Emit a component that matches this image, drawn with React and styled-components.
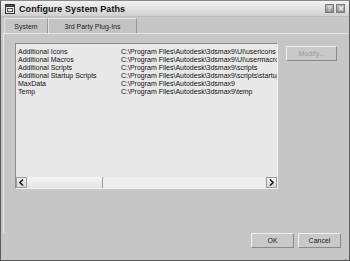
import React from 'react';
import styled, { createGlobalStyle } from 'styled-components';

const GlobalStyle = createGlobalStyle`
  html, body {
    margin: 0;
    padding: 0;
    background: #c6c6c6;
  }
  * {
    box-sizing: border-box;
  }
`;

const Window = styled.div`
  width: 350px;
  height: 261px;
  background: #c6c6c6;
  border: 1px solid #5a5a5a;
  border-top-color: #8a8a8a;
  display: flex;
  flex-direction: column;
  font-family: "Liberation Sans", Arial, sans-serif;
  color: #111;
  overflow: hidden;
  position: relative;
`;

const TitleBar = styled.div`
  height: 16px;
  display: flex;
  align-items: center;
  padding: 0 4px 0 4px;
  background: linear-gradient(#f2f2f2, #dcdcdc 70%, #cfcfcf);
  border-bottom: 1px solid #bcbcbc;
`;

const TitleText = styled.span`
  margin-left: 4px;
  font-size: 9px;
  font-weight: bold;
  letter-spacing: 0.1px;
  flex: 1;
`;

const TitleButton = styled.div`
  width: 9px;
  height: 9px;
  margin-left: 2px;
  border: 1px solid #7c7c7c;
  background: linear-gradient(#bdbdbd, #8f8f8f);
  display: flex;
  align-items: center;
  justify-content: center;
  font-size: 7px;
  font-weight: bold;
  color: #f4f4f4;
  line-height: 1;
`;

const TabRow = styled.div`
  display: flex;
  padding: 1px 0 0 3px;
  height: 16px;
`;

const Tab = styled.div`
  width: ${p => p.w}px;
  height: 16px;
  display: flex;
  align-items: center;
  justify-content: center;
  font-size: 7px;
  border: 1px solid #e2e2e2;
  border-right-color: #9a9a9a;
  border-bottom: none;
  background: ${p => (p.active ? '#c6c6c6' : '#c3c3c3')};
  color: #222;
`;

const Panel = styled.div`
  flex: 1;
  border-top: 1px solid #e6e6e6;
  border-left: 1px solid #e6e6e6;
  margin-left: 2px;
  display: flex;
  padding: 9px 0 0 11px;
`;

const ListBox = styled.div`
  width: 263px;
  height: 146px;
  background: #e8e8e8;
  border: 1px solid #8c8c8c;
  border-right-color: #f2f2f2;
  border-bottom-color: #f2f2f2;
  display: flex;
  flex-direction: column;
`;

const Rows = styled.div`
  flex: 1;
  padding: 4px 0 0 2px;
  overflow: hidden;
`;

const Row = styled.div`
  display: grid;
  grid-template-columns: 103px 1fr;
  height: 8px;
  font-size: 7px;
  line-height: 8px;
  white-space: nowrap;
  overflow: hidden;
`;

const Cell = styled.span`
  overflow: hidden;
`;

const ScrollBar = styled.div`
  height: 11px;
  display: flex;
  background: #eeeeee;
`;

const ArrowButton = styled.div`
  width: 11px;
  height: 11px;
  border: 1px solid #9c9c9c;
  background: linear-gradient(#f4f4f4, #d6d6d6);
  display: flex;
  align-items: center;
  justify-content: center;
`;

const Thumb = styled.div`
  width: 76px;
  border-right: 1px solid #9c9c9c;
  background: linear-gradient(#f6f6f6, #e4e4e4);
`;

const Track = styled.div`
  flex: 1;
`;

const SideColumn = styled.div`
  padding: 3px 0 0 8px;
`;

const Button = styled.div`
  width: ${p => p.w || 43}px;
  height: 15px;
  display: flex;
  align-items: center;
  justify-content: center;
  font-size: 7px;
  color: ${p => (p.disabled ? '#9a9a9a' : '#222')};
  border: 1px solid #f0f0f0;
  border-right-color: #8a8a8a;
  border-bottom-color: #8a8a8a;
  background: #c9c9c9;
`;

const Footer = styled.div`
  display: flex;
  justify-content: flex-end;
  gap: 4px;
  padding: 0 8px 12px 0;
`;

const Grip = styled.div`
  position: absolute;
  right: 2px;
  bottom: 2px;
  width: 7px;
  height: 7px;
`;

const Chevron = ({ dir }) => (
  <svg width="5" height="7" viewBox="0 0 5 7">
    <path
      d={dir === 'left' ? 'M4 0.5 L1 3.5 L4 6.5' : 'M1 0.5 L4 3.5 L1 6.5'}
      stroke="#222"
      strokeWidth="1.6"
      fill="none"
    />
  </svg>
);

const paths = [
  ['Additional Icons', 'C:\\Program Files\\Autodesk\\3dsmax9\\UI\\usericons'],
  ['Additional Macros', 'C:\\Program Files\\Autodesk\\3dsmax9\\UI\\usermacros'],
  ['Additional Scripts', 'C:\\Program Files\\Autodesk\\3dsmax9\\scripts'],
  ['Additional Startup Scripts', 'C:\\Program Files\\Autodesk\\3dsmax9\\scripts\\startup'],
  ['MaxData', 'C:\\Program Files\\Autodesk\\3dsmax9'],
  ['Temp', 'C:\\Program Files\\Autodesk\\3dsmax9\\temp'],
];

const App = () => {
  return (
    <>
      <GlobalStyle />
      <Window>
        <TitleBar>
          <svg width="10" height="10" viewBox="0 0 10 10">
            <rect x="0.5" y="0.5" width="9" height="9" fill="#e8e8e8" stroke="#333" />
            <rect x="1" y="1" width="8" height="2" fill="#444" />
            <rect x="2.5" y="4.5" width="5" height="3" fill="none" stroke="#555" />
          </svg>
          <TitleText>Configure System Paths</TitleText>
          <TitleButton>?</TitleButton>
          <TitleButton>✕</TitleButton>
        </TitleBar>

        <TabRow>
          <Tab w={44} active>System</Tab>
          <Tab w={89}>3rd Party Plug-Ins</Tab>
        </TabRow>

        <Panel>
          <ListBox>
            <Rows>
              {paths.map(([name, path]) => (
                <Row key={name}>
                  <Cell>{name}</Cell>
                  <Cell>{path}</Cell>
                </Row>
              ))}
            </Rows>
            <ScrollBar>
              <ArrowButton><Chevron dir="left" /></ArrowButton>
              <Thumb />
              <Track />
              <ArrowButton><Chevron dir="right" /></ArrowButton>
            </ScrollBar>
          </ListBox>
          <SideColumn>
            <Button w={51} disabled>Modify...</Button>
          </SideColumn>
        </Panel>

        <Footer>
          <Button>OK</Button>
          <Button>Cancel</Button>
        </Footer>

        <Grip>
          <svg width="7" height="7" viewBox="0 0 7 7">
            <rect x="5" y="1" width="1" height="1" fill="#777" />
            <rect x="3" y="3" width="1" height="1" fill="#777" />
            <rect x="5" y="3" width="1" height="1" fill="#777" />
            <rect x="1" y="5" width="1" height="1" fill="#777" />
            <rect x="3" y="5" width="1" height="1" fill="#777" />
            <rect x="5" y="5" width="1" height="1" fill="#777" />
          </svg>
        </Grip>
      </Window>
    </>
  );
};

export default App;
